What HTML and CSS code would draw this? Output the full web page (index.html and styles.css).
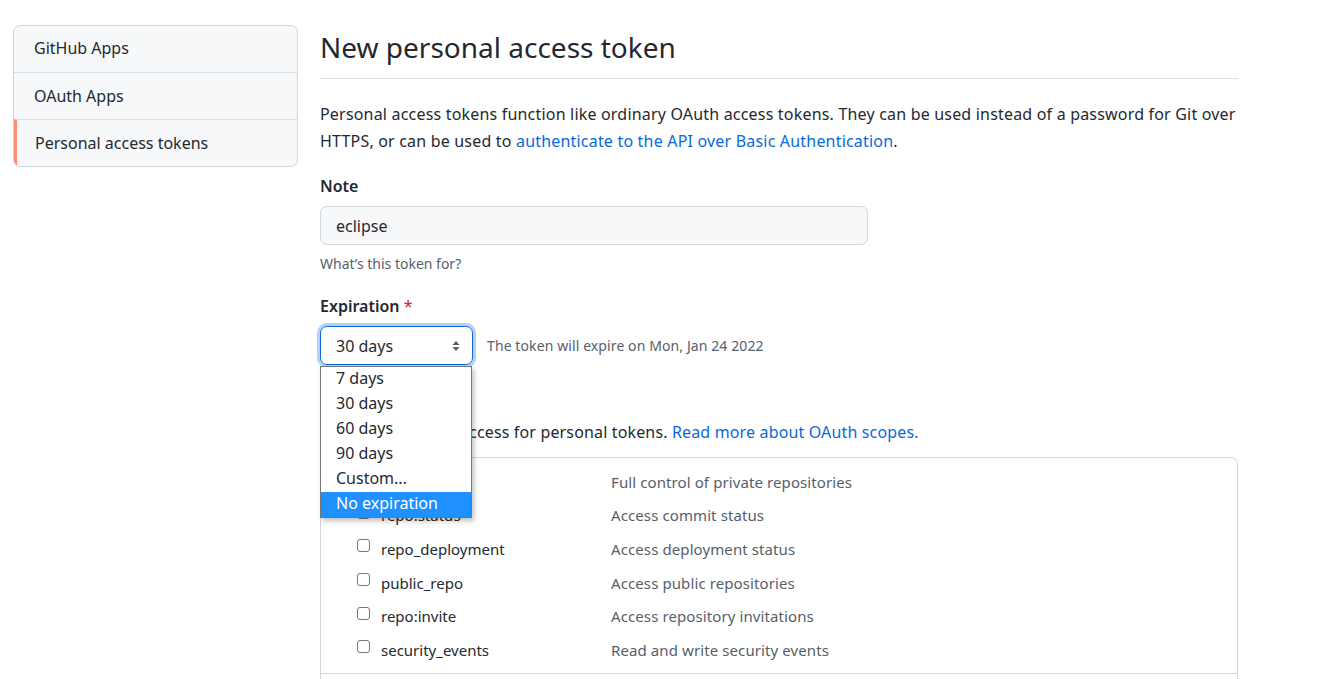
FILE: index.html
```html
<!DOCTYPE html>
<html lang="en">
<head>
    <meta charset="UTF-8">
    <meta name="viewport" content="width=device-width, initial-scale=1.0">
    <title>New personal access token</title>
    <link rel="stylesheet" href="styles.css">
</head>
<body>
    <div class="layout">
        <nav class="menu">
            <a class="menu-item" href="#">GitHub Apps</a>
            <a class="menu-item" href="#">OAuth Apps</a>
            <a class="menu-item selected" href="#">Personal access tokens</a>
        </nav>

        <main class="content">
            <div class="subhead">
                <h2>New personal access token</h2>
            </div>
            <p class="intro">Personal access tokens function like ordinary OAuth access tokens. They can be used instead of a password for Git over HTTPS, or can be used to <a href="#">authenticate to the API over Basic Authentication</a>.</p>

            <div class="form-group">
                <label class="label">Note</label>
                <input class="input" type="text" value="eclipse">
                <p class="note">What’s this token for?</p>
            </div>

            <div class="form-group">
                <label class="label">Expiration <span class="required">*</span></label>
                <div class="expire-row">
                    <div class="select-wrap">
                        <div class="select">
                            <span>30 days</span>
                            <svg width="8" height="12" viewBox="0 0 8 12"><path d="M4 1 L7.5 5 H0.5 Z M4 11 L7.5 7 H0.5 Z" fill="#57606a"/></svg>
                        </div>
                        <ul class="options">
                            <li>7 days</li>
                            <li>30 days</li>
                            <li>60 days</li>
                            <li>90 days</li>
                            <li>Custom...</li>
                            <li class="active">No expiration</li>
                        </ul>
                    </div>
                    <span class="expire-note">The token will expire on Mon, Jan 24 2022</span>
                </div>
            </div>

            <div class="form-group scopes-head">
                <label class="label">Select scopes</label>
                <p class="scopes-text">Scopes define the access for personal tokens. <a href="#">Read more about OAuth scopes.</a></p>
            </div>

            <div class="scopes">
                <div class="scope-group">
                    <div class="scope parent">
                        <label class="scope-name"><input type="checkbox"> repo</label>
                        <span class="scope-desc">Full control of private repositories</span>
                    </div>
                    <div class="scope">
                        <label class="scope-name"><input type="checkbox"> repo:status</label>
                        <span class="scope-desc">Access commit status</span>
                    </div>
                    <div class="scope">
                        <label class="scope-name"><input type="checkbox"> repo_deployment</label>
                        <span class="scope-desc">Access deployment status</span>
                    </div>
                    <div class="scope">
                        <label class="scope-name"><input type="checkbox"> public_repo</label>
                        <span class="scope-desc">Access public repositories</span>
                    </div>
                    <div class="scope">
                        <label class="scope-name"><input type="checkbox"> repo:invite</label>
                        <span class="scope-desc">Access repository invitations</span>
                    </div>
                    <div class="scope">
                        <label class="scope-name"><input type="checkbox"> security_events</label>
                        <span class="scope-desc">Read and write security events</span>
                    </div>
                </div>
                <div class="scope-group">
                    <div class="scope parent">
                        <label class="scope-name"><input type="checkbox"> workflow</label>
                        <span class="scope-desc">Update GitHub Action workflows</span>
                    </div>
                </div>
            </div>
        </main>
    </div>
</body>
</html>
```

FILE: styles.css
```css
body {
    font-family: "Noto Sans", "Open Sans", sans-serif;
    font-size: 16px;
    color: #24292f;
    margin: 0;
    background-color: #fff;
}
a {
    color: #0969da;
    text-decoration: none;
}
.layout {
    display: flex;
    gap: 22px;
    padding: 24px 0 0 13px;
    align-items: flex-start;
}
.menu {
    width: 283px;
    flex-shrink: 0;
    margin-top: 1px;
    display: flex;
    flex-direction: column;
    background-color: #f6f8fa;
    border: 1px solid #d0d7de;
    border-radius: 7px;
    overflow: hidden;
}
.menu-item {
    display: block;
    height: 47px;
    line-height: 46px;
    padding-left: 20px;
    color: #24292f;
    border-top: 1px solid #d8dee4;
    box-sizing: border-box;
}
.menu-item:first-child {
    border-top: 0;
    height: 46px;
    line-height: 45px;
}
.menu-item.selected {
    border-left: 3px solid #fd8c73;
    padding-left: 18px;
}
.content {
    width: 918px;
}
.subhead {
    border-bottom: 1px solid #d8dee4;
    padding-bottom: 8px;
}
.subhead h2 {
    margin: 0;
    font-size: 28px;
    font-weight: 400;
    line-height: 46px;
}
.intro {
    margin: 22px 0 0;
    line-height: 27px;
    letter-spacing: 0.19px;
}
.form-group {
    margin-top: 19px;
}
.label {
    display: block;
    font-weight: 600;
    line-height: 24px;
    margin-bottom: 8px;
}
.required {
    color: #cf222e;
    font-weight: 400;
}
.input {
    display: block;
    width: 548px;
    height: 39px;
    box-sizing: border-box;
    padding: 0 15px;
    font: inherit;
    color: #24292f;
    background-color: #f6f8fa;
    border: 1px solid #d0d7de;
    border-radius: 7px;
}
.note {
    margin: 8px 0 0;
    font-size: 14px;
    color: #57606a;
    line-height: 22px;
}
.expire-row {
    display: flex;
    align-items: center;
    gap: 14px;
}
.select-wrap {
    position: relative;
}
.select {
    width: 153px;
    height: 39px;
    box-sizing: border-box;
    display: flex;
    align-items: center;
    justify-content: space-between;
    padding: 0 12px 0 15px;
    border: 1px solid #0969da;
    border-radius: 7px;
    box-shadow: 0 0 0 3px rgba(9, 105, 218, 0.3);
}
.select span {
    line-height: 22px;
    padding-top: 1px;
}
.options {
    position: absolute;
    top: 40px;
    left: 0;
    width: 152px;
    box-sizing: border-box;
    margin: 0;
    padding: 0;
    list-style: none;
    background-color: #fff;
    border: 1px solid #767676;
    box-shadow: 2px 3px 5px rgba(0, 0, 0, 0.25);
    z-index: 5;
}
.options li {
    height: 25px;
    line-height: 23px;
    padding-left: 15px;
    padding-bottom: 2px;
    box-sizing: border-box;
}
.options li.active {
    background-color: #1e90ff;
    color: #fff;
}
.expire-note {
    font-size: 14px;
    color: #57606a;
    letter-spacing: 0.1px;
}
.scopes-head {
    margin-top: 23px;
}
.scopes-text {
    margin: 0;
    line-height: 24px;
    letter-spacing: 0.15px;
}
.scopes {
    margin-top: 13px;
    border: 1px solid #d0d7de;
    border-radius: 7px;
}
.scope-group {
    padding: 7px 0 6px;
    border-top: 1px solid #d0d7de;
}
.scope-group:first-child {
    border-top: 0;
}
.scope {
    display: flex;
    height: 33.6px;
    align-items: center;
    font-size: 15px;
}
.scope-name {
    width: 290px;
    box-sizing: border-box;
    padding-left: 36px;
    display: flex;
    align-items: center;
    gap: 11px;
}
.scope.parent .scope-name {
    padding-left: 16px;
}
.scope-desc {
    color: #57606a;
    letter-spacing: 0.1px;
}
.scope input {
    appearance: none;
    width: 13px;
    height: 13px;
    margin: 0;
    border: 1px solid #767676;
    border-radius: 3px;
    background-color: #fff;
    position: relative;
    top: -3px;
}
```
